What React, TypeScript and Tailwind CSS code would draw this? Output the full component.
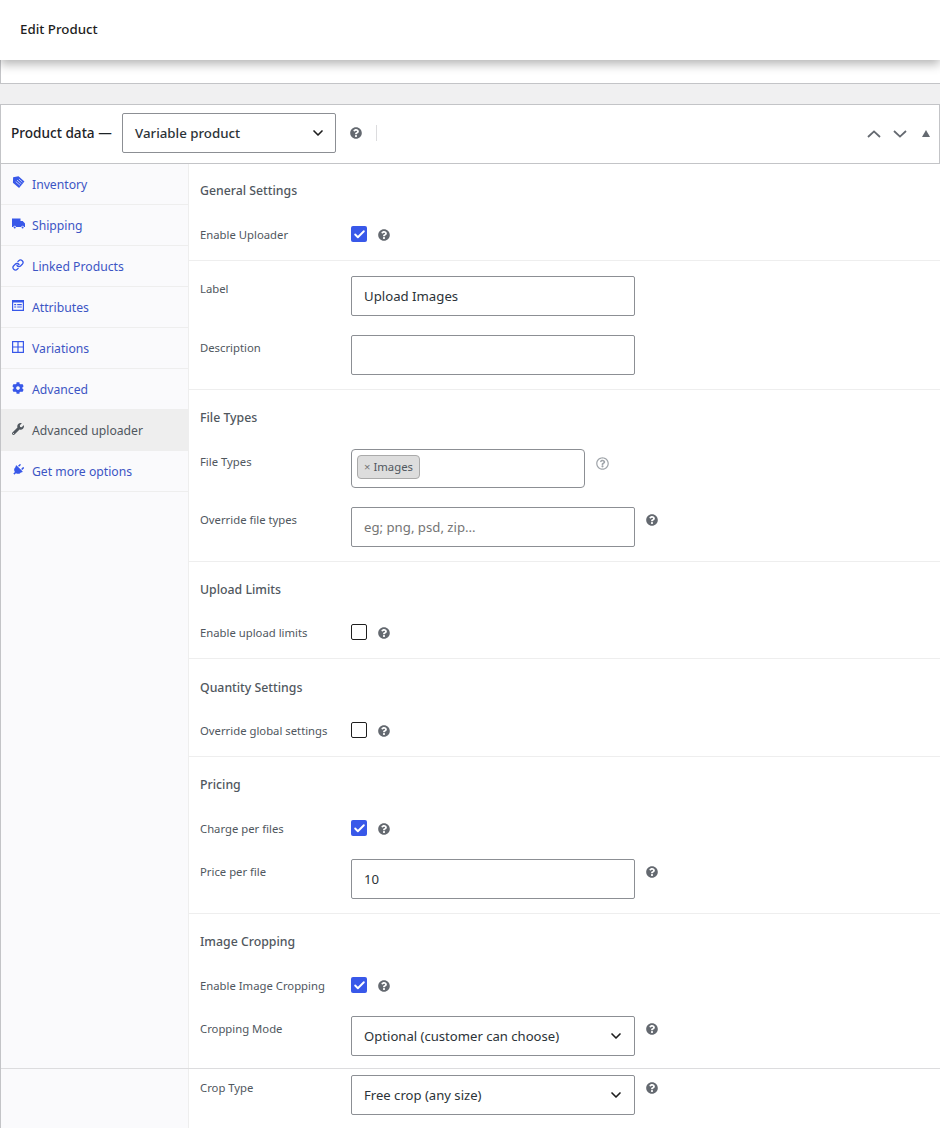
import React from 'react';
import { FaCog, FaPlug, FaQuestionCircle, FaRegQuestionCircle, FaWrench } from 'react-icons/fa';
import { Check, ChevronDown, Link } from 'lucide-react';

function TagIcon() {
  return (
    <svg viewBox="0 0 14 14" className="w-[13px] h-[13px]">
      <path d="M7 0.4 L13.4 6 L7.6 13 L1 7.4 L1.2 1.4 Z" fill="#3858e9" />
      <path d="M5.4 4.4 L10 8.4 M4 6 L8.6 10 M7.4 3.2 L11.2 6.6" stroke="#fff" strokeWidth="0.7" fill="none" />
    </svg>
  );
}

function TruckIcon() {
  return (
    <svg viewBox="0 0 13 11" className="w-[13px] h-[11px]" fill="currentColor">
      <path d="M0 0.5h8.5v2.5h2.2L13 5.5v3.6h-1.1a1.3 1.3 0 0 0-2.6 0H4a1.3 1.3 0 0 0-2.6 0H0Z" />
      <circle cx="2.7" cy="9.6" r="1" />
      <circle cx="10.6" cy="9.6" r="1" />
    </svg>
  );
}

function ListIcon() {
  return (
    <svg viewBox="0 0 12 11" className="w-[12px] h-[11px]" fill="currentColor">
      <path fillRule="evenodd" d="M0 0h12v11H0Z M1.2 2.6v7.2h9.6V2.6Z M2.2 4h2v1.2h-2Z M5.2 4h4.6v1.2H5.2Z M2.2 6.4h2v1.2h-2Z M5.2 6.4h4.6v1.2H5.2Z" />
    </svg>
  );
}

function GridIcon() {
  return (
    <svg viewBox="0 0 12 12" className="w-[12px] h-[12px]" fill="none" stroke="currentColor" strokeWidth="1.2">
      <rect x="0.6" y="0.6" width="10.8" height="10.8" />
      <path d="M6 0.6v10.8M0.6 6h10.8" />
    </svg>
  );
}

function Chevron({ up = false }: { up?: boolean }) {
  return (
    <svg viewBox="0 0 14 8" className="w-[14px] h-[8px]" fill="none" stroke="currentColor" strokeWidth="1.8">
      <path d={up ? 'M1 7 L7 1.4 L13 7' : 'M1 1 L7 6.6 L13 1'} />
    </svg>
  );
}

const tabs = [
  { label: 'Inventory', icon: <TagIcon /> },
  { label: 'Shipping', icon: <TruckIcon /> },
  { label: 'Linked Products', icon: <Link className="w-[12px] h-[12px]" strokeWidth={2.6} /> },
  { label: 'Attributes', icon: <ListIcon /> },
  { label: 'Variations', icon: <GridIcon /> },
  { label: 'Advanced', icon: <FaCog className="w-[12px] h-[12px]" /> },
  { label: 'Advanced uploader', icon: <FaWrench className="w-[12px] h-[12px]" />, active: true },
  { label: 'Get more options', icon: <FaPlug className="w-[12px] h-[12px] rotate-45" /> },
];

function Help({ className = '' }: { className?: string }) {
  return <FaQuestionCircle className={`w-[12px] h-[12px] text-[#646970] shrink-0 ${className}`} />;
}

function Heading({ children }: { children: React.ReactNode }) {
  return <h3 className="h-5 leading-[22px] text-[12.3px] font-medium text-[#50575e]">{children}</h3>;
}

function Label({ children }: { children: React.ReactNode }) {
  return <label className="block w-[151px] shrink-0 pt-[2px] text-[11.3px] leading-5 text-[#50575e]">{children}</label>;
}

function CheckRow({ label, checked, className = '' }: { label: string; checked?: boolean; className?: string }) {
  return (
    <div className={`flex items-center h-5 ${className}`}>
      <Label>{label}</Label>
      {checked ? (
        <span className="w-4 h-4 rounded-[2px] bg-[#3858e9] flex items-center justify-center">
          <Check className="w-[13px] h-[13px] text-white" strokeWidth={3.5} />
        </span>
      ) : (
        <span className="w-4 h-4 rounded-[2px] border border-[#1e1e1e] bg-white" />
      )}
      <Help className="ml-[11px] mt-px" />
    </div>
  );
}

function FieldRow({ label, children, className = '' }: { label: string; children: React.ReactNode; className?: string }) {
  return (
    <div className={`flex items-start ${className}`}>
      <div className="w-[151px] shrink-0 pt-px">
        <Label>{label}</Label>
      </div>
      {children}
    </div>
  );
}

function TextBox({ value, placeholder }: { value?: string; placeholder?: string }) {
  return (
    <div className={`w-[284px] h-10 rounded-[2px] border border-[#8c8f94] bg-white px-3 pt-[2px] flex items-center text-[13.2px] ${placeholder ? 'text-[#757575]' : 'text-[#2c3338]'}`}>
      {value || placeholder || ''}
    </div>
  );
}

function SelectBox({ value }: { value: string }) {
  return (
    <div className="w-[284px] h-10 rounded-[2px] border border-[#8c8f94] bg-white pl-3 pr-[10px] flex items-center justify-between text-[13.1px] text-[#2c3338]">
      <span className="pt-[2px]">{value}</span>
      <ChevronDown className="w-[16px] h-[16px] text-[#1e1e1e]" strokeWidth={2.5} />
    </div>
  );
}

export default function App() {
  return (
    <div className="w-[940px] h-[1128px] overflow-hidden bg-[#f0f0f1] font-['Noto_Sans','Open_Sans',sans-serif]">
      {/* Top bar */}
      <header className="relative z-10 h-[60px] bg-white flex items-center px-5 text-[13.3px] font-medium text-[#1e1e1e] shadow-[0_4px_10px_rgba(0,0,0,0.3)]">
        Edit Product
      </header>
      <div className="h-6 bg-white border-l border-b border-[#c3c4c7]" />

      {/* Product data panel */}
      <section className="mt-[20px] bg-white border-t border-l border-[#c3c4c7]">
        <div className="h-[59px] flex items-center border-b border-[#c3c4c7] border-r pl-[10px] pr-[9px]">
          <span className="text-[13.6px] font-medium text-[#1d2327] w-[111px] -mt-[2px]">Product data —</span>
          <div className="w-[214px] h-10 -mt-[3px] rounded-[2px] border border-[#8c8f94] bg-white pl-3 pr-[9px] flex items-center justify-between text-[13.3px] font-medium text-[#2c3338]">
            <span className="pt-[2px]">Variable product</span>
            <ChevronDown className="w-[16px] h-[16px] text-[#1e1e1e]" strokeWidth={2.5} />
          </div>
          <Help className="ml-[14px] -mt-[3px]" />
          <span className="ml-[14px] w-px h-4 -mt-[3px] bg-[#dcdcde]" />
          <div className="ml-auto flex items-center -mt-px text-[#646970]">
            <Chevron up />
            <span className="ml-[12px]"><Chevron /></span>
            <span className="ml-[15px] w-0 h-0 border-l-[4px] border-r-[4px] border-b-[7px] border-l-transparent border-r-transparent border-b-[#646970]" />
          </div>
        </div>

        <div className="flex">
          <nav className="w-[188px] shrink-0 bg-[#fafafc] border-r border-[#eee]">
            <ul>
              {tabs.map((t) => (
                <li
                  key={t.label}
                  className={`h-[41px] flex items-center border-b border-[#eee] pl-[11px] pt-[2px] text-[12.2px] ${t.active ? 'bg-[#eee] text-[#50575e]' : 'text-[#3c55c4]'}`}
                >
                  <span className={`w-[20px] -mt-[5px] flex ${t.active ? 'text-[#50575e]' : 'text-[#3858e9]'}`}>{t.icon}</span>
                  {t.label}
                </li>
              ))}
            </ul>
          </nav>

          <div className="flex-1 min-w-0 divide-y divide-[#eee]">
            <div className="pl-[11px] pt-4 pb-4">
              <Heading>General Settings</Heading>
              <CheckRow className="mt-6" label="Enable Uploader" checked />
            </div>
            <div className="pl-[11px] pt-[15px] pb-[14px]">
              <FieldRow label="Label"><TextBox value="Upload Images" /></FieldRow>
              <FieldRow label="Description" className="mt-[19px]"><TextBox /></FieldRow>
            </div>
            <div className="pl-[11px] pt-[17px] pb-[14px]">
              <Heading>File Types</Heading>
              <FieldRow label="File Types" className="mt-[22px]">
                <div className="w-[234px] h-[39px] rounded-[4px] border border-[#8c8f94] bg-white px-[5px] flex items-center">
                  <span className="h-6 -mt-[3px] px-[6px] rounded-[4px] border border-[#aaa] bg-[#ddd] flex items-center gap-[3px] text-[11.3px] text-[#50575e]">
                    <span className="text-[#777]">×</span>Images
                  </span>
                </div>
                <FaRegQuestionCircle className="ml-[11px] mt-[8px] w-[13px] h-[13px] text-[#a0a5aa]" />
              </FieldRow>
              <FieldRow label="Override file types" className="mt-[19px]">
                <TextBox placeholder="eg; png, psd, zip..." />
                <Help className="ml-[11px] mt-[7px]" />
              </FieldRow>
            </div>
            <div className="pl-[11px] pt-[17px] pb-4">
              <Heading>Upload Limits</Heading>
              <CheckRow className="mt-[23px]" label="Enable upload limits" />
            </div>
            <div className="pl-[11px] pt-[18px] pb-4">
              <Heading>Quantity Settings</Heading>
              <CheckRow className="mt-[23px]" label="Override global settings" />
            </div>
            <div className="pl-[11px] pt-[17px] pb-[14px]">
              <Heading>Pricing</Heading>
              <CheckRow className="mt-6" label="Charge per files" checked />
              <FieldRow label="Price per file" className="mt-[21px]">
                <TextBox value="10" />
                <Help className="ml-[11px] mt-[7px]" />
              </FieldRow>
            </div>
            <div className="pl-[11px] pt-[17px] pb-3">
              <Heading>Image Cropping</Heading>
              <CheckRow className="mt-6" label="Enable Image Cropping" checked />
              <FieldRow label="Cropping Mode" className="mt-[21px]">
                <SelectBox value="Optional (customer can choose)" />
                <Help className="ml-[11px] mt-[7px]" />
              </FieldRow>
            </div>
          </div>
        </div>

        <div className="flex border-t border-[#dcdcde]">
          <div className="w-[188px] shrink-0 h-[60px] bg-[#fafafc] border-r border-[#eee]" />
          <div className="flex-1 pl-[11px] pt-[6px]">
            <FieldRow label="Crop Type">
              <SelectBox value="Free crop (any size)" />
              <Help className="ml-[11px] mt-[7px]" />
            </FieldRow>
          </div>
        </div>
      </section>
    </div>
  );
}
